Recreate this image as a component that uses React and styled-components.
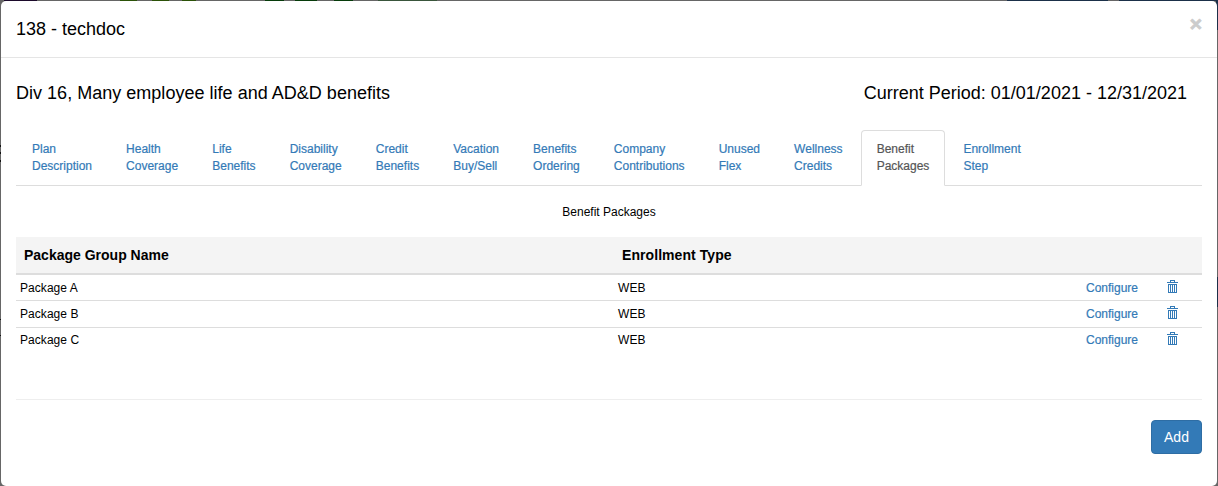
import React from 'react';
import styled, { createGlobalStyle } from 'styled-components';

const GlobalStyle = createGlobalStyle`
  *, *::before, *::after { box-sizing: border-box; }
  body {
    margin: 0;
    overflow: hidden;
    font-family: "Liberation Sans", Arial, sans-serif;
    font-size: 12px;
    line-height: 17px;
    color: #000;
  }
`;

const Backdrop = styled.div`
  height: 486px;
  padding: 1px 1px 0;
  background:
    linear-gradient(#1c0a2b, #1c0a2b) 4px 0 / 33px 1px no-repeat,
    linear-gradient(#2b5208, #2b5208) 120px 0 / 17px 1px no-repeat,
    linear-gradient(#2b5208, #2b5208) 152px 0 / 17px 1px no-repeat,
    linear-gradient(#2b5208, #2b5208) 182px 0 / 14px 1px no-repeat,
    linear-gradient(#063b0a, #063b0a) 265px 0 / 19px 1px no-repeat,
    linear-gradient(#063b0a, #063b0a) 295px 0 / 22px 1px no-repeat,
    linear-gradient(#063b0a, #063b0a) 334px 0 / 19px 1px no-repeat,
    linear-gradient(#39553b, #39553b) 378px 0 / 59px 1px no-repeat,
    linear-gradient(#1b3049, #1b3049) 1007px 0 / 101px 1px no-repeat,
    linear-gradient(#1b3049, #1b3049) 1119px 0 / 99px 1px no-repeat,
    linear-gradient(#1b3049, #1b3049) 1216px 0 / 2px 30px no-repeat,
    linear-gradient(#1b3049, #1b3049) 1217px 277px / 1px 30px no-repeat,
    linear-gradient(#111, #111) 0 145px / 1px 2px no-repeat,
    linear-gradient(#111, #111) 0 152px / 1px 2px no-repeat,
    linear-gradient(#111, #111) 0 160px / 1px 2px no-repeat,
    linear-gradient(#111, #111) 0 319px / 1px 1px no-repeat,
    linear-gradient(#111, #111) 0 335px / 1px 1px no-repeat,
    #666;
`;

const Modal = styled.div`
  height: 485px;
  background: #fff;
  border-radius: 5px;
`;

const ModalHeader = styled.header`
  display: flex;
  justify-content: space-between;
  height: 57px;
  padding: 15px;
  border-bottom: 1px solid #e5e5e5;
`;

const Heading = styled.h4`
  margin: 0;
  font-size: 18px;
  font-weight: 400;
  line-height: 26px;
  letter-spacing: ${(p) => p.$tracking || 'normal'};
`;

const Close = styled.button`
  height: 18px;
  margin-top: -3px;
  padding: 0;
  border: 0;
  background: none;
  color: #ccc;
  font: 700 21px/21px "Liberation Sans", Arial, sans-serif;
  -webkit-text-stroke: 0.8px #ccc;
`;

const ModalBody = styled.main`
  padding: 22px 15px 0;
`;

const Summary = styled.div`
  display: flex;
  justify-content: space-between;
  padding-right: 15px;
`;

const Tabs = styled.nav`
  display: flex;
  height: 56px;
  margin-top: 24px;
  border-bottom: 1px solid #ddd;
`;

const Tab = styled.a`
  height: 56px;
  margin-right: 2.09px;
  padding: 10px 15px;
  border: 1px solid ${(p) => (p.$active ? '#ddd' : 'transparent')};
  border-bottom-color: ${(p) => (p.$active ? '#fff' : 'transparent')};
  border-radius: 4px 4px 0 0;
  color: ${(p) => (p.$active ? '#555' : '#337ab7')};
  -webkit-text-stroke: 0.2px currentColor;
  white-space: pre-line;
`;

const Caption = styled.div`
  height: 51px;
  padding-top: 18px;
  text-align: center;
`;

const Table = styled.table`
  width: 100%;
  table-layout: fixed;
  border-spacing: 0;
`;

const HeadCell = styled.th`
  width: ${(p) => p.$width};
  height: 38px;
  padding: 0 8px;
  background: #f4f4f4;
  border-bottom: 2px solid #ddd;
  font-size: 14px;
  letter-spacing: ${(p) => p.$tracking || 'normal'};
  text-align: left;
`;

const Row = styled.tr`
  height: ${(p) => p.$height}px;
`;

const Cell = styled.td`
  padding: ${(p) => (p.$last ? 4 : 5)}px 4px 0;
  border-bottom: 1px solid ${(p) => (p.$last ? 'transparent' : '#ddd')};
  letter-spacing: 0.05px;
  vertical-align: top;
`;

const Link = styled.a`
  color: #337ab7;
  letter-spacing: 0;
  -webkit-text-stroke: 0.2px currentColor;
`;

const TrashIcon = styled.svg`
  display: block;
  margin-left: 1px;
`;

const Divider = styled.hr`
  margin: 45px 0 20px;
  border: 0;
  border-top: 1px solid #eee;
`;

const Actions = styled.div`
  display: flex;
  justify-content: flex-end;
`;

const Button = styled.button`
  width: 51px;
  height: 34px;
  padding: 0;
  border: 1px solid #2e6da4;
  border-radius: 4px;
  background: #337ab7;
  color: #fff;
  font: 14px/20px "Liberation Sans", Arial, sans-serif;
`;

const tabs = [
  'Plan\nDescription',
  'Health\nCoverage',
  'Life\nBenefits',
  'Disability\nCoverage',
  'Credit\nBenefits',
  'Vacation\nBuy/Sell',
  'Benefits\nOrdering',
  'Company\nContributions',
  'Unused\nFlex',
  'Wellness\nCredits',
  'Benefit\nPackages',
  'Enrollment\nStep',
];

const packages = [
  { name: 'Package A', type: 'WEB', height: 26 },
  { name: 'Package B', type: 'WEB', height: 27 },
  { name: 'Package C', type: 'WEB', height: 26 },
];

function Trash() {
  return (
    <TrashIcon width="11" height="13" viewBox="0 0 11 13" fill="#337ab7">
      <path d="M3 0h5v1H3zM3 1h1v1H3zM7 1h1v1H7zM0 2h11v1H0zM1 4h9v1H1zM1 5h1v7H1zM3 5h1v7H3zM5 5h1v7H5zM7 5h1v7H7zM9 5h1v7H9zM1 12h9v1H1z" />
    </TrashIcon>
  );
}

export default function App() {
  return (
    <Backdrop>
      <GlobalStyle />
      <Modal>
        <ModalHeader>
          <Heading>138 - techdoc</Heading>
          <Close aria-label="Close">×</Close>
        </ModalHeader>
        <ModalBody>
          <Summary>
            <Heading $tracking="0.02px">Div 16, Many employee life and AD&amp;D benefits</Heading>
            <Heading>Current Period: 01/01/2021 - 12/31/2021</Heading>
          </Summary>
          <Tabs>
            {tabs.map((label) => (
              <Tab key={label} $active={label === 'Benefit\nPackages'}>{label}</Tab>
            ))}
          </Tabs>
          <Caption>Benefit Packages</Caption>
          <Table>
            <thead>
              <tr>
                <HeadCell $width="598px">Package Group Name</HeadCell>
                <HeadCell $width="468px" $tracking="0.07px">Enrollment Type</HeadCell>
                <HeadCell $width="80px" />
                <HeadCell />
              </tr>
            </thead>
            <tbody>
              {packages.map((item, i) => (
                <Row key={item.name} $height={item.height}>
                  <Cell $last={i === 2}>{item.name}</Cell>
                  <Cell $last={i === 2}>{item.type}</Cell>
                  <Cell $last={i === 2}><Link>Configure</Link></Cell>
                  <Cell $last={i === 2}><Trash /></Cell>
                </Row>
              ))}
            </tbody>
          </Table>
          <Divider />
          <Actions><Button>Add</Button></Actions>
        </ModalBody>
      </Modal>
    </Backdrop>
  );
}
